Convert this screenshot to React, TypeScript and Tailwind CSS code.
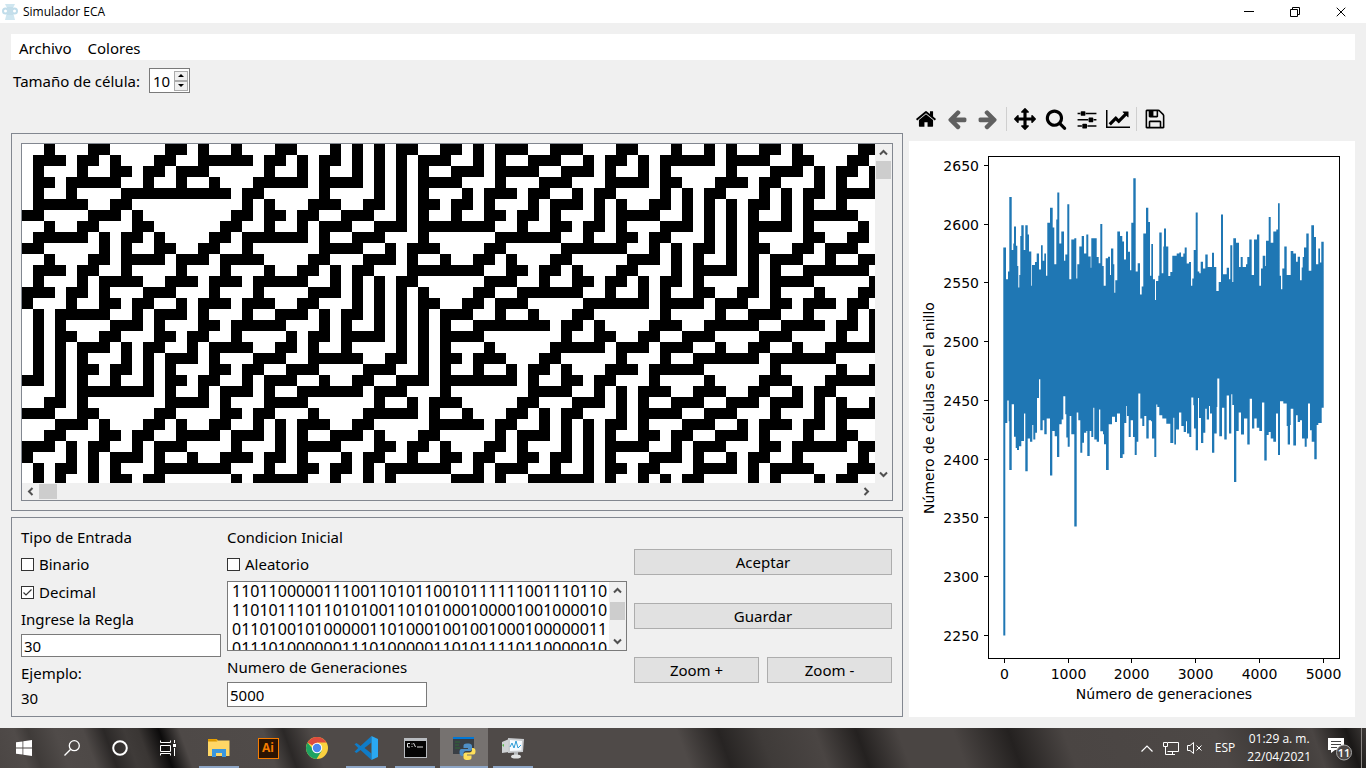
import type { ReactNode } from "react";
import { X } from "lucide-react";

const CELL = 11;
const COLUMNS = 78;
const ROWS = 31;
const FIRST_GENERATION = [
  2, 6, 7, 13, 14, 16, 19, 23, 24, 28, 30, 32, 34, 35, 38, 39, 41, 43, 44, 45,
  48, 49, 50, 54, 55, 59, 62, 64, 67, 68, 70, 76, 77,
];
const LEFT_EDGE = [6, 9, 13, 14, 21, 24, 27, 28];
const RIGHT_EDGE = [
  0, 2, 3, 4, 10, 12, 13, 15, 16, 17, 18, 20, 21, 23, 24, 27, 29,
];

/** Rule 30: next = left XOR (center OR right). */
function evolve(): boolean[][] {
  const rows: boolean[][] = [
    Array.from({ length: COLUMNS }, (_, i) => FIRST_GENERATION.includes(i)),
  ];
  for (let r = 1; r < ROWS; r++) {
    const prev = rows[r - 1];
    rows.push(
      prev.map((center, i) => {
        if (i === 0) return LEFT_EDGE.includes(r);
        if (i === COLUMNS - 1) return RIGHT_EDGE.includes(r);
        return prev[i - 1] !== (center || prev[i + 1]);
      }),
    );
  }
  return rows;
}

const cellPath = evolve()
  .flatMap((row, r) =>
    row.map((on, c) =>
      on ? `M${c * CELL} ${r * CELL}h${CELL}v${CELL}h-${CELL}z` : "",
    ),
  )
  .join("");

const TOPS =
  "70:273 78:362 84:340 88:132 95:280 100:262 102:214 108:268 112:325 115:385 118:350 121:241 124:211 131:280 136:211 143:237 147:284 154:380 156:322 165:314 170:290 177:335 183:267 188:310 193:290 198:352 202:204 210:162 218:217 223:320 229:195 232:119 238:262 244:228 252:310 256:293 262:152 268:362 274:251 283:247 289:360 292:320 298:270 305:241 312:290 319:237 325:298 332:330 334:247 350:300 356:317 361:207 367:325 371:380 377:303 384:299 390:350 393:276 400:320 403:400 406:365 412:228 420:241 427:256 432:307 438:228 444:285 450:337 454:204 460:79 467:340 473:317 480:405 485:382 490:234 498:162 505:202 510:352 514:263 519:362 525:420 528:367 535:352 538:231 545:345 550:270 552:220 558:270 565:353 571:342 577:296 590:290 598:287 603:299 610:290 614:273 620:318 627:314 633:380 637:360 641:280 647:175 653:340 658:345 662:313 669:332 676:293 683:328 696:288 702:328 709:395 716:370 723:181 729:348 740:330 747:362 751:267 757:370 760:247 768:260 777:328 782:300 788:328 798:320 802:300 808:251 815:350 822:251 831:237 838:380 843:332 848:296 856:325 858:254 866:188 872:260 880:228 889:223 894:149 899:352 903:390 907:332 913:270 920:350 932:283 940:290 948:313 953:299 960:365 965:329 968:300 972:273 979:234 986:338 994:211 1002:244 1008:320 1015:276 1020:315 1024:257 1031:257";
const BOTTOMS =
  "70:1360 76:765 82:702 86:760 88:896 95:712 102:803 107:835 111:840 117:830 124:815 132:738 136:900 143:808 150:817 157:770 160:811 166:792 171:695 177:642 181:785 188:757 193:796 200:752 210:912 217:787 224:802 231:860 238:768 245:755 250:690 256:740 259:805 263:831 269:745 274:796 283:1055 290:735 295:757 301:848 307:820 312:792 319:787 322:857 329:787 334:804 340:722 343:811 350:817 357:727 361:788 369:796 372:824 378:896 386:768 396:747 405:762 411:738 420:863 428:852 433:765 439:717 441:745 446:804 452:757 459:804 464:854 470:817 475:682 481:752 487:773 493:745 499:808 506:757 513:760 516:808 523:860 529:713 532:720 538:743 547:752 559:767 571:821 580:750 583:825 588:783 597:735 604:773 611:790 618:760 621:794 628:804 634:693 640:715 642:780 647:841 654:695 657:751 663:821 670:792 676:725 680:755 687:717 690:738 696:848 703:794 710:720 712:640 718:802 726:722 733:811 740:688 747:794 754:684 757:714 762:930 769:787 776:735 783:797 792:752 802:825 809:697 816:780 823:752 830:778 838:787 846:707 853:870 860:798 866:790 872:808 880:817 888:738 894:854 900:704 910:710 920:773 923:825 930:770 932:725 940:828 948:743 953:762 960:757 966:808 974:831 980:808 984:710 990:785 995:817 1003:866 1010:770 1015:765 1025:722 1031:722";

function steps(data: string): [number, number][] {
  const points = data.split(" ").map((p) => p.split(":").map(Number));
  return points.flatMap(([x, y], i): [number, number][] => {
    const px = 71 + x / 3;
    const py = 9 + y * 0.357;
    const next = points[i + 1];
    return next ? [[px, py], [71 + next[0] / 3, py]] : [[px, py]];
  });
}

const seriesPoints = [...steps(TOPS), ...steps(BOTTOMS).reverse()]
  .map(([x, y]) => `${x.toFixed(1)},${y.toFixed(1)}`)
  .join(" ");

const Y_TICKS = [2650, 2600, 2550, 2500, 2450, 2400, 2350, 2300, 2250];
const X_TICKS = [0, 1000, 2000, 3000, 4000, 5000];

function Chart() {
  return (
    <svg
      viewBox="0 0 446 576"
      className="h-full w-full"
      role="img"
      aria-label="Número de células en el anillo por generación"
      fontFamily="'DejaVu Sans', sans-serif"
      fontSize="14"
    >
      <polygon points={seriesPoints} fill="#1f77b4" />
      <rect x="79.5" y="15.5" width="351" height="502" fill="none" stroke="#000" />
      {Y_TICKS.map((tick, i) => {
        const y = Math.round(24 + i * 58.7) + 0.5;
        return (
          <g key={tick}>
            <path d={`M75 ${y}h5`} stroke="#000" />
            <text x="70" y={y + 5} textAnchor="end">
              {tick}
            </text>
          </g>
        );
      })}
      {X_TICKS.map((tick, i) => {
        const x = Math.round(95 + i * 63.7) + 0.5;
        return (
          <g key={tick}>
            <path d={`M${x} 518v4`} stroke="#000" />
            <text x={x} y="538" textAnchor="middle">
              {tick}
            </text>
          </g>
        );
      })}
      <text x="255" y="558" textAnchor="middle">
        Número de generaciones
      </text>
      <text transform="translate(25 267) rotate(-90)" textAnchor="middle">
        Número de células en el anillo
      </text>
    </svg>
  );
}

const TOOLS = {
  home: "M1472 992v480q0 26-19 45t-45 19h-384v-384h-256v384h-384q-26 0-45-19t-19-45v-480q0-1 .5-3t.5-3l575-474 575 474q1 2 1 6zm223-69l-62 74q-8 9-21 11h-3q-13 0-21-7l-692-577-692 577q-12 8-24 7-13-2-21-11l-62-74q-8-10-7-23.5t11-21.5l719-599q32-26 76-26t76 26l244 204v-195q0-14 9-23t23-9h192q14 0 23 9t9 23v408l219 182q10 8 11 21.5t-7 23.5z",
  back: "M1664 896v128q0 53-32.5 90.5t-84.5 37.5h-704l293 294q38 36 38 90t-38 90l-75 76q-37 37-90 37-52 0-91-37l-651-652q-37-37-37-90 0-52 37-91l651-650q38-38 91-38 52 0 90 38l75 74q38 38 38 91t-38 91l-293 293h704q52 0 84.5 37.5t32.5 90.5z",
  move: "M1792 896q0 26-19 45l-256 256q-19 19-45 19t-45-19-19-45v-128h-384v384h128q26 0 45 19t19 45-19 45l-256 256q-19 19-45 19t-45-19l-256-256q-19-19-19-45t19-45 45-19h128v-384h-384v128q0 26-19 45t-45 19-45-19l-256-256q-19-19-19-45t19-45l256-256q19-19 45-19t45 19 19 45v128h384v-384h-128q-26 0-45-19t-19-45 19-45l256-256q19-19 45-19t45 19l256 256q19 19 19 45t-19 45-45 19h-128v384h384v-128q0-26 19-45t45-19 45 19l256 256q19 19 19 45z",
  search: "M1216 832q0-185-131.5-316.5t-316.5-131.5-316.5 131.5-131.5 316.5 131.5 316.5 316.5 131.5 316.5-131.5 131.5-316.5zm512 832q0 52-38 90t-90 38q-54 0-90-38l-343-342q-179 124-399 124-143 0-273.5-55.5t-225-150-150-225-55.5-273.5 55.5-273.5 150-225 225-150 273.5-55.5 273.5 55.5 225 150 150 225 55.5 273.5q0 220-124 399l343 343q37 37 37 90z",
  sliders: "M480 1408v128h-352v-128h352zm352-128q26 0 45 19t19 45v256q0 26-19 45t-45 19h-256q-26 0-45-19t-19-45v-256q0-26 19-45t45-19h256zm160-384v128h-864v-128h864zm-640-512v128h-224v-128h224zm1312 1024v128h-736v-128h736zm-960-1152q26 0 45 19t19 45v256q0 26-19 45t-45 19h-256q-26 0-45-19t-19-45v-256q0-26 19-45t45-19h256zm640 512q26 0 45 19t19 45v256q0 26-19 45t-45 19h-256q-26 0-45-19t-19-45v-256q0-26 19-45t45-19h256zm320 128v128h-224v-128h224zm0-512v128h-864v-128h864z",
  chart: "M2048 1536v128h-2048v-1536h128v1408h1920zm-128-1248v435q0 21-19.5 29.5t-35.5-7.5l-121-121-633 633q-10 10-23 10t-23-10l-233-233-416 416-192-192 585-585q10-10 23-10t23 10l233 233 464-464-121-121q-16-16-7.5-35.5t29.5-19.5h435q14 0 23 9t9 23z",
  save: "M512 1536h768v-384h-768v384zm896 0h128v-896q0-14-10-38.5t-20-34.5l-281-281q-10-10-34-20t-39-10v416q0 40-28 68t-68 28h-576q-40 0-68-28t-28-68v-416h-128v1280h128v-416q0-40 28-68t68-28h832q40 0 68 28t28 68v416zm-384-928v-320q0-13-9.5-22.5t-22.5-9.5h-192q-13 0-22.5 9.5t-9.5 22.5v320q0 13 9.5 22.5t22.5 9.5h192q13 0 22.5-9.5t9.5-22.5zm640 32v928q0 40-28 68t-68 28h-1344q-40 0-68-28t-28-68v-1344q0-40 28-68t68-28h928q40 0 88 20t76 48l280 280q28 28 48 76t20 88z",
};

function Tool({ name, label, flip, muted }: {
  name: keyof typeof TOOLS;
  label: string;
  flip?: boolean;
  muted?: boolean;
}) {
  const wide = name === "chart";
  return (
    <button type="button" aria-label={label} className="flex h-[30px] w-[31px] items-center justify-center">
      <svg
        viewBox={wide ? "0 0 2048 1792" : "0 0 1792 1792"}
        className={wide ? "h-[22px] w-6 shrink-0" : "size-[22px] shrink-0"}
        fill={muted ? "#606060" : "#000"}
      >
        <path d={TOOLS[name]} transform={flip ? "translate(1792 0) scale(-1 1)" : undefined} />
      </svg>
    </button>
  );
}

function ToolSeparator() {
  return (
    <div className="flex h-6 w-[6px] justify-center">
      <div className="w-px bg-[#cfcfcf]" />
    </div>
  );
}

function Chevron({ d }: { d: string }) {
  return (
    <svg viewBox="0 0 9 9" className="size-[9px]" fill="none" stroke="#505050" strokeWidth="2">
      <path d={d} />
    </svg>
  );
}
const UP = "M1 6.5L4.5 3L8 6.5";
const DOWN = "M1 2.5L4.5 6L8 2.5";
const LEFT = "M6.5 1L3 4.5L6.5 8";
const RIGHT = "M2.5 1L6 4.5L2.5 8";

function VerticalScroll({ thumb }: { thumb: ReactNode }) {
  return (
    <div className="flex w-[17px] shrink-0 flex-col items-center bg-[#f0f0f0]">
      <button type="button" aria-label="Subir" className="flex h-[17px] items-center">
        <Chevron d={UP} />
      </button>
      <div className="flex w-full flex-1 flex-col px-px">{thumb}</div>
      <button type="button" aria-label="Bajar" className="flex h-[17px] items-center">
        <Chevron d={DOWN} />
      </button>
    </div>
  );
}

function AutomatonView() {
  return (
    <section className="flex flex-1 flex-col border border-[#828790] p-[9px]">
      <div className="flex flex-1 flex-col border border-[#828790] bg-white">
        <div className="flex min-h-0 flex-1">
          <svg className="h-[339px] min-w-0 flex-1" role="img" aria-label="Evolución del autómata" shapeRendering="crispEdges">
            <path d={cellPath} />
          </svg>
          <VerticalScroll thumb={<div className="h-[18px] bg-[#cdcdcd]" />} />
        </div>
        <div className="flex h-[17px] items-center bg-[#f0f0f0] pr-[17px]">
          <button type="button" aria-label="Izquierda" className="flex w-[17px] justify-center">
            <Chevron d={LEFT} />
          </button>
          <div className="flex flex-1 self-stretch py-px">
            <div className="w-[18px] bg-[#cdcdcd]" />
          </div>
          <button type="button" aria-label="Derecha" className="flex w-[17px] justify-center">
            <Chevron d={RIGHT} />
          </button>
        </div>
      </div>
    </section>
  );
}

function Check({ label, checked }: { label: string; checked?: boolean }) {
  return (
    <label className="flex h-7 items-center gap-[5px]">
      <span className="grid size-[13px]">
        <input
          type="checkbox"
          defaultChecked={checked}
          className="peer col-start-1 row-start-1 size-[13px] appearance-none border border-[#333] bg-white"
        />
        <svg viewBox="0 0 13 13" className="pointer-events-none invisible col-start-1 row-start-1 size-[13px] peer-checked:visible" fill="none" stroke="#333" strokeWidth="1.2">
          <path d="M2.5 6.5L5 9L10.5 3.5" />
        </svg>
      </span>
      {label}
    </label>
  );
}

const INITIAL = `11011000001110011010110010111111001110110
11010111011010100110101000100001001000010
01101001010000011010001001001000100000011
01110100000011101000001101011110110000010`;

const BUTTON = "h-[26px] border border-[#adadad] bg-[#e1e1e1]";
const FIELD = "mt-0.5 w-[200px] border border-[#7a7a7a] bg-white px-[2px]";

function Controls() {
  return (
    <section className="grid h-[200px] grid-cols-[200px_400px_1fr] gap-[6px] border border-[#828790] pr-[10px] pl-[9px] pt-2">
      <div className="flex flex-col">
        <span className="h-[22px] leading-[22px]">Tipo de Entrada</span>
        <div className="mt-0.5">
          <Check label="Binario" />
          <Check label="Decimal" checked />
        </div>
        <label htmlFor="regla" className="h-[26px] leading-[26px]">Ingrese la Regla</label>
        <input id="regla" defaultValue="30" className={`${FIELD} h-[23px]`} />
        <span className="mt-[3px] h-[26px] leading-[26px]">Ejemplo:</span>
        <span className="h-6 leading-6">30</span>
      </div>
      <div className="flex flex-col">
        <span className="h-[22px] leading-[22px]">Condicion Inicial</span>
        <div className="mt-0.5">
          <Check label="Aleatorio" />
        </div>
        <div className="mt-[3px] flex h-[70px] border border-[#7a7a7a] bg-white">
          <textarea
            aria-label="Condicion Inicial"
            defaultValue={INITIAL}
            className="min-w-0 flex-1 resize-none overflow-hidden whitespace-pre bg-white pl-1 text-[16px] leading-[19px] outline-none"
          />
          <VerticalScroll thumb={<div className="mt-[3px] h-[18px] bg-[#cdcdcd]" />} />
        </div>
        <label htmlFor="generaciones" className="mt-[3px] h-[26px] leading-[26px]">Numero de Generaciones</label>
        <input id="generaciones" defaultValue="5000" className={`${FIELD} h-[25px]`} />
      </div>
      <div className="flex flex-col gap-7 pl-px pt-[23px]">
        <button type="button" className={BUTTON}>Aceptar</button>
        <button type="button" className={BUTTON}>Guardar</button>
        <div className="grid grid-cols-2 gap-2">
          <button type="button" className={BUTTON}>Zoom +</button>
          <button type="button" className={BUTTON}>Zoom -</button>
        </div>
      </div>
    </section>
  );
}

function SpinArrow({ label, d }: { label: string; d: string }) {
  return (
    <button type="button" aria-label={label} className="flex h-[10px] w-[14px] items-center justify-center border border-[#acacac] bg-[#f0f0f0]">
      <svg viewBox="0 0 6 3" className="h-[3px] w-[6px]">
        <path d={d} />
      </svg>
    </button>
  );
}

function TaskButton({ label, open, active, children }: {
  label: string;
  open?: boolean;
  active?: boolean;
  children: ReactNode;
}) {
  return (
    <button
      type="button"
      aria-label={label}
      className={`flex h-10 w-12 flex-col items-center ${active ? "bg-[#767270]" : ""}`}
    >
      <span className="flex h-[38px] items-center pt-[2px]">{children}</span>
      <span className={`h-[2px] ${active ? "w-12" : "w-10"} ${open ? "bg-[#8ea6c6]" : ""}`} />
    </button>
  );
}

function Taskbar() {
  return (
    <footer className="flex h-10 items-center bg-[#4d4846] bg-[linear-gradient(70deg,#4b4644_0%,#504b49_2%,#3f3b39_3%,#504b49_5%,#4e4947_7%,#2b2827_8.5%,#3f3b39_10%,#3a3634_11%,#0c0b0b_12.5%,#4e4947_14%,#504b49_20%,#2b2827_21.5%,#4f4a48_23.5%,#4f4a48_50%,#272423_53%,#3f3b39_56%,#4a4543_60%,#242120_63%,#4a4543_66%,#4a4543_70%,#242120_74%,#4a4543_78%,#4d4846_89%,#3a3634_93%,#4a4543_96%,#1a1817_98.5%,#3f3b39_100%)] text-white">
      <TaskButton label="Inicio">
        <svg viewBox="0 0 16 16" className="size-4" fill="#fff">
          <path d="M0 2.3L6.5 1.4V7.6H0zM7.3 1.3L16 0V7.6H7.3zM0 8.4H6.5V14.6L0 13.7zM7.3 8.4H16V16L7.3 14.7z" />
        </svg>
      </TaskButton>
      <TaskButton label="Buscar">
        <svg viewBox="0 0 16 16" className="size-4" fill="none" stroke="#fff" strokeWidth="1.3">
          <circle cx="10.3" cy="5.7" r="5" />
          <path d="M6.7 9.3L.5 15.5" />
        </svg>
      </TaskButton>
      <TaskButton label="Cortana">
        <svg viewBox="0 0 16 16" className="size-4" fill="none" stroke="#fff" strokeWidth="2">
          <circle cx="8" cy="8" r="6.8" />
        </svg>
      </TaskButton>
      <TaskButton label="Vista de tareas">
        <svg viewBox="0 0 16 16" className="size-4" fill="none" stroke="#fff" strokeWidth="1">
          <path d="M.5 .5V2.5H10.5V.5M.5 5.5H10.5V11.5H.5zM.5 15.5V13.5H10.5V15.5M14.5 0V3M14.5 8V16" />
          <path d="M13 4h3v3h-3z" fill="#fff" stroke="none" />
        </svg>
      </TaskButton>
      <div className="ml-[3px] flex gap-px">
        <TaskButton label="Explorador de archivos" open>
          <svg viewBox="0 0 22 18" className="h-[18px] w-[22px]">
            <path d="M0 0h9l1 2H0z" fill="#e8a000" />
            <path d="M0 1.5h21.5V17H0z" fill="#ffd766" />
            <path d="M0 1h8l1.5 1.5H0z" fill="#d99700" />
            <path d="M4 10h14v8h-4v-4H8v4H4z" fill="#3b97dd" />
          </svg>
        </TaskButton>
        <TaskButton label="Illustrator">
          <span className="flex h-[21px] w-[21px] items-center justify-center border border-[#f57c00] bg-[#2b1403] font-['Open_Sans',sans-serif] text-[12px] font-bold text-[#f57c00]">
            Ai
          </span>
        </TaskButton>
        <TaskButton label="Chrome">
          <svg viewBox="0 0 22 22" className="size-[22px]">
            <circle cx="11" cy="11" r="11" fill="#fbd13f" />
            <path d="M11 11L1.5 5.5A11 11 0 0 1 20.5 5.5H11z" fill="#dd4b3e" />
            <path d="M1.5 5.5A11 11 0 0 0 10.5 22L15.7 13.7L11 11H6z" fill="#1ea362" />
            <circle cx="11" cy="11" r="5.2" fill="#fff" />
            <circle cx="11" cy="11" r="4.2" fill="#4a86ee" />
          </svg>
        </TaskButton>
        <TaskButton label="Visual Studio Code" open>
          <svg viewBox="0 0 24 24" className="size-6">
            <path d="M17.5 0L6.5 10L2.6 7L.5 8.2L4.200 12L.5 15.8L2.6 17L6.5 14L17.5 24V17.500L10.5 12L17.5 6.500z" fill="#0f7cc8" />
            <path d="M17.5 0L24 3V21L17.5 24z" fill="#2aa8f2" />
          </svg>
        </TaskButton>
        <TaskButton label="Símbolo del sistema" open>
          <svg viewBox="0 0 23 20" className="h-5 w-[23px]">
            <path d="M0 0h23v20H0z" fill="#b9bcc0" />
            <path d="M1 3h21v16H1z" fill="#050505" />
            <path d="M6 5.5H3.5V9H6M8 5.5v1M8 8v1M9.5 5l2 4M13 9h6" fill="none" stroke="#ddd" />
          </svg>
        </TaskButton>
        <TaskButton label="Python" open active>
          <svg viewBox="0 0 24 24" className="size-6">
            <path d="M1 1h21v17H1z" fill="#3a3f45" />
            <path d="M1 1h21v2H1z" fill="#0078d7" />
            <path d="M3 6h5M3 9h4M3 12h5" stroke="#2f6b35" />
            <path d="M15 7.5c-3 0-3.5 1-3.5 2.500V12H16v1H9.500C8 13 7.500 14.500 7.500 16.500S8.500 20 10 20h1.500v-2.500c0-1.500 1-2.500 2.500-2.500h4c1 0 2-1 2-2V10c0-2-2-2.500-5-2.500z" fill="#4f8fc6" />
            <path d="M16 24c3 0 3.500-1 3.500-2.500V19.500H15v-1h6.500c1.500 0 2-1.500 2-3.500S22.500 12 21 12h-1v2c0 1.500-1 2.500-2.500 2.500h-4c-1 0-2 1-2 2v3c0 2 1.500 2.500 4.500 2.500z" fill="#ffe05a" />
          </svg>
        </TaskButton>
        <TaskButton label="Administrador de tareas" open>
          <svg viewBox="0 0 24 22" className="h-[22px] w-6">
            <path d="M1 5l7-3v13l-7 1z" fill="#cfd2d4" />
            <path d="M1 8l2 2v-3z" fill="#56b948" />
            <path d="M7 1l16 1-1 13-15 1z" fill="#c9cccf" />
            <path d="M9 3l12 1-.5 9.500L9 14z" fill="#f7fbff" />
            <path d="M9 10l2-4 2 5 2-7 2 7 3-3" fill="none" stroke="#2c9bd6" />
            <path d="M13 15h4v4h-4z" fill="#b5b8bb" />
            <ellipse cx="15" cy="19.500" rx="5" ry="2" fill="#dfe1e2" />
          </svg>
        </TaskButton>
      </div>
      <div className="ml-auto flex h-10 items-center font-['Open_Sans',sans-serif] text-[12px]">
        <svg viewBox="0 0 12 7" className="h-[7px] w-3" fill="none" stroke="#fff" strokeWidth="1.2">
          <path d="M.5 6.500L6 1L11.500 6.500" />
        </svg>
        <svg viewBox="0 0 16 14" className="ml-[10px] h-[14px] w-4" fill="none" stroke="#fff">
          <path d="M5 1.500H15.500V10.500H4.500M2.500 5V13.500H12M9.500 10.500V13.500M.5 1.500h4v4h-4z" />
        </svg>
        <svg viewBox="0 0 16 14" className="ml-2 h-[14px] w-4" fill="none" stroke="#fff">
          <path d="M.5 4.500H3L6.500 1.500V12.500L3 9.500H.5zM9.500 4.500l5 5M14.500 4.500l-5 5" />
        </svg>
        <span className="ml-3">ESP</span>
        <div className="ml-3 text-center leading-[18px]">
          <div>01:29 a. m.</div>
          <div>22/04/2021</div>
        </div>
        <button type="button" aria-label="Notificaciones" className="ml-4 mr-2">
          <svg viewBox="0 0 26 26" className="size-[26px]" fontFamily="'Open Sans', sans-serif" fontSize="11" fontWeight="600">
            <path d="M1 3h16v12h-9l-4 3v-3h-3z" fill="#fff" />
            <path d="M4 6.500h10M4 9.500h10M4 12.500h6" stroke="#444" />
            <circle cx="17" cy="17.500" r="7.500" fill="#4d4846" stroke="#aaa" />
            <text x="17" y="21.500" textAnchor="middle" fill="#fff">11</text>
          </svg>
        </button>
        <div className="mr-1 h-10 w-px bg-[#8a8684]" />
      </div>
    </footer>
  );
}

export default function App() {
  return (
    <div className="flex min-h-screen flex-col bg-[#f0f0f0] font-['Noto_Sans',sans-serif] text-[15px] leading-6 text-black">
      <header className="flex h-[23px] items-center bg-white pr-[2px] font-['Open_Sans',sans-serif] text-[12px]">
        <svg viewBox="0 0 16 16" className="ml-[2px] size-4" fill="#cfe6f0">
          <path d="M3 0h10l-2 4h-6zM5 8h6l2 8h-10z" />
          <g fill="none" stroke="#bfdcea" strokeWidth="2">
            <circle cx="3.500" cy="7" r="2.500" />
            <circle cx="12.500" cy="7" r="2.500" />
          </g>
          <path d="M5 3h6v8h-6z" fill="#c4deea" />
        </svg>
        <h1 className="ml-[5px]">Simulador ECA</h1>
        <div className="ml-auto flex">
          <button type="button" aria-label="Minimizar" className="flex h-5 w-[46px] items-center justify-center">
            <span className="h-px w-[10px] bg-black" />
          </button>
          <button type="button" aria-label="Restaurar" className="flex h-5 w-[46px] items-center justify-center">
            <svg viewBox="0 0 10 10" className="size-[10px]" fill="none" stroke="#000">
              <path d="M.5 2.500h7v7h-7zM2.500 2.500v-2h7v7h-2" />
            </svg>
          </button>
          <button type="button" aria-label="Cerrar" className="flex h-5 w-[46px] items-center justify-center">
            <X className="size-4" strokeWidth={1.5} />
          </button>
        </div>
      </header>
      <main className="flex flex-1 flex-col px-[11px] pt-[11px] pb-[11px]">
        <nav className="flex h-[26px] items-center gap-4 bg-white px-2 pt-[2px]">
          <button type="button">Archivo</button>
          <button type="button">Colores</button>
        </nav>
        <div className="mt-2 flex h-[25px] items-center gap-[9px] pl-[2px]">
          <label htmlFor="celula">Tamaño de célula:</label>
          <div className="flex h-[25px] w-[41px] items-center border border-[#7a7a7a] bg-white pr-px">
            <input id="celula" defaultValue="10" className="w-full min-w-0 flex-1 pl-[3px]" />
            <div className="flex flex-col">
              <SpinArrow label="Aumentar" d="M0 3L3 0L6 3z" />
              <SpinArrow label="Reducir" d="M0 0L3 3L6 0z" />
            </div>
          </div>
        </div>
        <div className="mt-[10px] grid flex-1 grid-cols-[2fr_1fr] gap-[6px]">
          <div className="flex min-w-0 flex-col gap-[6px] pt-[30px]">
            <AutomatonView />
            <Controls />
          </div>
          <div className="flex min-w-0 flex-col">
            <div className="flex h-[38px] items-center pb-[7px] pl-px">
              <Tool name="home" label="Inicio de la gráfica" />
              <Tool name="back" label="Atrás" muted />
              <Tool name="back" label="Adelante" flip muted />
              <ToolSeparator />
              <Tool name="move" label="Mover" />
              <Tool name="search" label="Ampliar" />
              <Tool name="sliders" label="Ajustar" />
              <Tool name="chart" label="Editar ejes" />
              <ToolSeparator />
              <Tool name="save" label="Guardar gráfica" />
            </div>
            <div className="flex-1 bg-white">
              <Chart />
            </div>
          </div>
        </div>
      </main>
      <Taskbar />
    </div>
  );
}
